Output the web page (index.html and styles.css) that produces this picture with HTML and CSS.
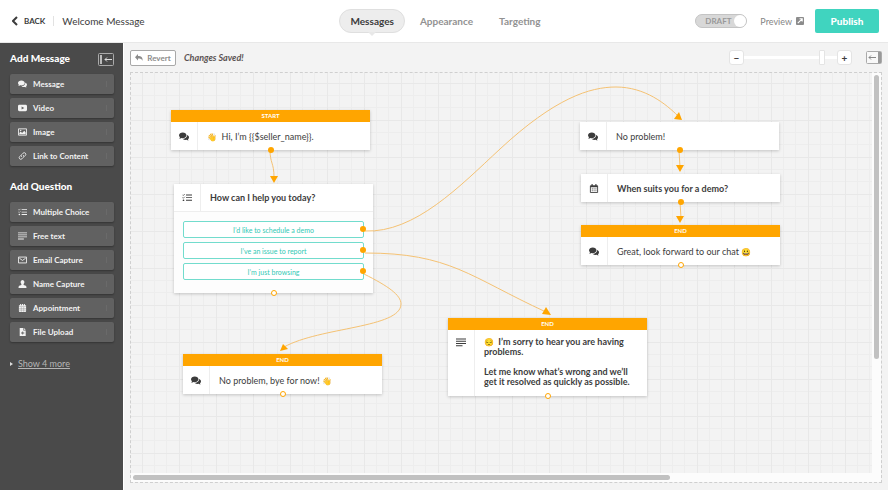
FILE: index.html
```html
<!DOCTYPE html>
<html lang="en">
<head>
  <meta charset="UTF-8" />
  <meta name="viewport" content="width=device-width, initial-scale=1.0"/>
  <title>Welcome Message</title>
  <link rel="stylesheet" href="styles.css">
</head>
<body>
  <!-- shared icons -->
  <svg class="sprite" aria-hidden="true">
    <symbol id="i-chat" viewBox="0 0 20 16">
      <path d="M7.5 0C3.4 0 0 2.5 0 5.7c0 1.5.7 2.8 1.9 3.8C1.7 10.7 1 11.8.6 12.3c1.7 0 3.3-.7 4.3-1.3.8.2 1.7.4 2.6.4C11.6 11.4 15 8.9 15 5.7S11.6 0 7.5 0z"/>
      <path d="M16.3 5.2c.1 4.3-3.6 7.500-8.500 7.600 1.200 1.300 3.100 2.100 5.200 2.100.8 0 1.500-.1 2.200-.3.9.6 2.300 1.200 4 1.200-.5-.6-1-1.500-1.200-2.500 1.200-.9 2-2.100 2-3.500 0-2-1.500-3.800-3.700-4.600z"/>
    </symbol>
    <symbol id="i-list" viewBox="0 0 20 16">
      <path d="M1 2.500l1.500 1.500L5.500 1M1 8l1.500 1.500L5.500 6.500" fill="none" stroke="currentColor" stroke-width="1.500"/>
      <circle cx="3" cy="13.500" r="1.700"/>
      <path d="M8 2h12v1.800H8zM8 7.300h12v1.800H8zM8 12.600h12v1.800H8z"/>
    </symbol>
    <symbol id="i-lines" viewBox="0 0 20 16">
      <path d="M0 0h20v2H0zM0 4.500h20v2H0zM0 9h20v2H0zM0 13.500h13v2H0z"/>
    </symbol>
    <symbol id="i-calendar" viewBox="0 0 20 20">
      <path d="M2 4h16v15H2z" fill="none" stroke="currentColor" stroke-width="2"/>
      <path d="M4.500 0H7v4H4.500zM13 0h2.500v4H13zM2 4h16v3H2z"/>
      <path d="M5 9.500h2.500v2.500H5zM9 9.500h2.500v2.500H9zM13 9.500h2.500v2.500H13zM5 14h2.500v2H5zM9 14h2.500v2H9zM13 14h2.500v2H13z" opacity=".7"/>
    </symbol>
  </svg>

  <header class="topbar">
    <div class="topbar-left">
      <a class="back" href="#">
        <svg width="6" height="10" viewBox="0 0 6 10"><path d="M5 1L1 5l4 4" fill="none" stroke="currentColor" stroke-width="2"/></svg>
        BACK
      </a>
      <h1>Welcome Message</h1>
    </div>

    <nav class="tabs">
      <a class="tab active" href="#">Messages</a>
      <a class="tab" href="#">Appearance</a>
      <a class="tab" href="#">Targeting</a>
    </nav>

    <div class="topbar-right">
      <button class="draft-toggle" type="button" role="switch" aria-checked="false"><span>DRAFT</span><i></i></button>
      <a class="preview" href="#">Preview
        <svg width="8" height="8" viewBox="0 0 18 18"><rect width="18" height="18" rx="2" fill="#8c8c8c"/><path d="M8 4h6v6M14 4L4 14" fill="none" stroke="#fff" stroke-width="2.500"/></svg>
      </a>
      <button class="publish" type="button">Publish</button>
    </div>
  </header>

  <div class="layout">
    <aside class="sidebar">
      <div class="sidebar-head">
        <h2>Add Message</h2>
        <button class="collapse" type="button" aria-label="Collapse sidebar">
          <svg width="16" height="13" viewBox="0 0 16 13"><rect x=".5" y=".5" width="15" height="12" rx="1" fill="none" stroke="#aaa"/><path d="M2 2h2v9H2z" fill="#bbb"/><path d="M14 6.500H7M9 4.500l-2 2 2 2" fill="none" stroke="#ddd"/></svg>
        </button>
      </div>
      <div class="block-list">
        <button class="block" type="button"><svg><use href="#i-chat"/></svg>Message</button>
        <button class="block" type="button">
          <svg viewBox="0 0 20 16"><path fill-rule="evenodd" d="M3 1h14q3 0 3 3v8q0 3-3 3H3q-3 0-3-3V4q0-3 3-3zM8 4.500v7l6-3.500z"/></svg>Video
        </button>
        <button class="block" type="button">
          <svg viewBox="0 0 20 16"><path d="M1 1h18v14H1z" fill="none" stroke="currentColor" stroke-width="2"/><path d="M3 13v-3l3-3 3 3 5-5 3 4v4z"/><circle cx="6" cy="4.500" r="1.500"/></svg>Image
        </button>
        <button class="block" type="button">
          <svg viewBox="0 0 20 20"><g transform="rotate(-45 10 10)" fill="none" stroke="currentColor" stroke-width="2"><path d="M8 6H4a4 4 0 0 0 0 8h5a4 4 0 0 0 4-4"/><path d="M12 14h4a4 4 0 0 0 0-8h-5a4 4 0 0 0-4 4"/></g></svg>Link to Content
        </button>
      </div>

      <h2>Add Question</h2>
      <div class="block-list">
        <button class="block" type="button"><svg><use href="#i-list"/></svg>Multiple Choice</button>
        <button class="block" type="button"><svg><use href="#i-lines"/></svg>Free text</button>
        <button class="block" type="button">
          <svg viewBox="0 0 20 16"><path d="M1 1.500h18v13H1zM3 4l7 5 7-5" fill="none" stroke="currentColor" stroke-width="2"/></svg>Email Capture
        </button>
        <button class="block" type="button">
          <svg viewBox="0 0 20 18"><path d="M10 0a4.500 5 0 0 1 2.500 9v2l5 2q1.500 1 1.500 5H1q0-4 1.500-5l5-2V9A4.500 5 0 0 1 10 0z"/></svg>Name Capture
        </button>
        <button class="block" type="button">
          <svg viewBox="0 0 20 20"><path d="M4 0h2.500v3h2V0H11.500v3h2V0H16v3h3v3H1V3h3zM1 7h18v11q0 2-2 2H3q-2 0-2-2z"/><path d="M1 11.500h18M1 15.500h18M7 7v13M13 7v13" stroke="#777" stroke-width=".8"/></svg>Appointment
        </button>
        <button class="block" type="button">
          <svg viewBox="0 0 20 20"><path fill-rule="evenodd" d="M3 0h9v6h6v14H3zM13.500 0L18 4.500h-4.500zM9.500 8.500v3h-3v2h3v3h2v-3h3v-2h-3v-3z"/></svg>File Upload
        </button>
      </div>
      <a class="show-more" href="#">Show 4 more</a>
    </aside>

    <main class="editor">
      <div class="toolbar">
        <button class="revert" type="button">
          <svg width="8" height="7" viewBox="0 0 16 14"><path d="M6 0v4c6 0 10 2 9 10-1-4-4-5-9-5v4L0 6.500z"/></svg>
          Revert
        </button>
        <em class="status">Changes Saved!</em>
        <div class="zoom">
          <button type="button" aria-label="Zoom out">−</button>
          <input type="range" min="0" max="100" value="86" aria-label="Zoom">
          <button type="button" aria-label="Zoom in">+</button>
        </div>
        <button class="collapse" type="button" aria-label="Expand panel">
          <svg width="16" height="13" viewBox="0 0 16 13"><rect x=".5" y=".5" width="15" height="12" rx="1" fill="#f8f8f8" stroke="#aaa"/><path d="M12 1h3v11h-3z" fill="#999"/><path d="M10 6.500H3M5 4.500l-2 2 2 2" fill="none" stroke="#888"/></svg>
        </button>
      </div>

      <div class="canvas">
        <svg class="links" aria-hidden="true">
          <g class="lines">
            <path d="M139 77C139 90 143 90 143 104"/>
            <path d="M234 158C284 160 329 113 369 76C424 25 459 14 485 14C514 14 535 31 547 43"/>
            <path d="M234 180C319 180 339 204 415 239"/>
            <path d="M233 201C257 213 270 222 270 231C270 255 189 254 153 274"/>
            <path d="M548 78L549 94M549 129L550 145"/>
          </g>
          <g class="arrows">
            <path d="M139 103h8l-4 7z"/>
            <path d="M548 39l3 8-8-1z"/>
            <path d="M415 234l5 8-9-1z"/>
            <path d="M152 271l5 5-8 2z"/>
            <path d="M545 92h8l-4 7z"/>
            <path d="M545 143h8l-4 7z"/>
          </g>
        </svg>

        <section class="node node-start">
          <div class="label">START</div>
          <div class="body"><div class="kind"><svg><use href="#i-chat"/></svg></div><p><span class="emoji">👋</span>&nbsp; Hi, I’m {{$seller_name}}.</p></div>
          <span class="port"></span>
        </section>

        <section class="node node-help">
          <div class="body question"><div class="kind"><svg><use href="#i-list"/></svg></div><p>How can I help you today?</p></div>
          <div class="options">
            <button type="button">I’d like to schedule a demo<span class="port side"></span></button>
            <button type="button">I’ve an issue to report<span class="port side"></span></button>
            <button type="button">I’m just browsing<span class="port side"></span></button>
          </div>
          <span class="port open"></span>
        </section>

        <section class="node node-ok">
          <div class="body"><div class="kind"><svg><use href="#i-chat"/></svg></div><p>No problem!</p></div>
          <span class="port"></span>
        </section>

        <section class="node node-demo">
          <div class="body question"><div class="kind"><svg><use href="#i-calendar"/></svg></div><p>When suits you for a demo?</p></div>
          <span class="port"></span>
        </section>

        <section class="node node-great">
          <div class="label">END</div>
          <div class="body"><div class="kind"><svg><use href="#i-chat"/></svg></div><p>Great, look forward to our chat <span class="emoji">😀</span></p></div>
          <span class="port open"></span>
        </section>

        <section class="node node-bye">
          <div class="label">END</div>
          <div class="body"><div class="kind"><svg><use href="#i-chat"/></svg></div><p>No problem, bye for now! <span class="emoji">👋</span></p></div>
          <span class="port open"></span>
        </section>

        <section class="node node-sorry">
          <div class="label">END</div>
          <div class="body question long">
            <div class="kind"><svg><use href="#i-lines"/></svg></div>
            <div class="text">
              <p><span class="emoji">😔</span>&nbsp; I’m sorry to hear you are having problems.</p>
              <p>Let me know what’s wrong and we’ll get it resolved as quickly as possible.</p>
            </div>
          </div>
          <span class="port open"></span>
        </section>

        <div class="scroll-y"><i></i></div>
        <div class="scroll-x"><i></i></div>
      </div>
    </main>
  </div>
</body>
</html>
```
FILE: styles.css
```css
* {
  box-sizing: border-box;
}

body {
  margin: 0;
  height: 100vh;
  display: flex;
  flex-direction: column;
  font-family: Lato, "Liberation Sans", sans-serif;
  font-size: 9px;
  color: #3c3c3c;
  background: #f3f3f3;
}

h1, h2, p {
  margin: 0;
}

a {
  color: inherit;
  text-decoration: none;
}

button {
  font: inherit;
  color: inherit;
  padding: 0;
  border: none;
  background: none;
  cursor: pointer;
}

svg {
  display: block;
  fill: currentColor;
}

.sprite {
  position: absolute;
  width: 0;
  height: 0;
}

/* Top bar */

.topbar {
  display: grid;
  grid-template-columns: 1fr auto 1fr;
  align-items: center;
  height: 43px;
  padding: 0 9px 0 12px;
  background: #fff;
  border-bottom: 1px solid #e8e8e8;
}

.topbar-left {
  display: flex;
  align-items: center;
}

.back {
  display: flex;
  align-items: center;
  gap: 6px;
  padding-right: 8px;
  border-right: 1px solid #e2e2e2;
  font-size: 8px;
  font-weight: bold;
}

h1 {
  margin-left: 8px;
  font-size: 10px;
  font-weight: normal;
}

.tabs {
  display: flex;
  gap: 4px;
}

.tab {
  position: relative;
  padding: 0 10px;
  border: 1px solid transparent;
  border-radius: 12px;
  font-size: 10px;
  line-height: 22px;
  font-weight: bold;
  color: #929292;
}

.tab.active {
  color: #3c3c3c;
  background: #ededed;
  border-color: #dfdfdf;
}

.tab.active::after {
  content: "";
  position: absolute;
  left: 50%;
  top: 100%;
  margin-left: -4px;
  border: 4px solid transparent;
  border-top-color: #e8e8e8;
  border-bottom: none;
}

.topbar-right {
  display: flex;
  align-items: center;
  justify-content: flex-end;
}

.draft-toggle {
  display: flex;
  align-items: center;
  justify-content: space-between;
  width: 52px;
  height: 14px;
  padding-left: 9px;
  border: 1px solid #c4c4c4;
  border-radius: 7px;
  background: #d8d8d8;
  color: #999;
  font-size: 8px;
  font-weight: bold;
}

.draft-toggle i {
  width: 12px;
  height: 12px;
  border-radius: 50%;
  background: #fff;
}

.preview {
  display: flex;
  align-items: center;
  gap: 4px;
  margin: 0 11px 0 13px;
  color: #858585;
}

.publish {
  width: 64px;
  height: 24px;
  border-radius: 2px;
  background: #40d4bf;
  color: #fff;
  font-size: 10px;
  font-weight: 900;
}

/* Sidebar */

.layout {
  flex: 1;
  display: flex;
  min-height: 0;
}

.sidebar {
  flex: none;
  width: 124px;
  padding: 6px 9px 0 10px;
  background: #4a4a4a;
  border-right: 1px solid #fff;
  color: #f2f2f2;
}

.sidebar-head {
  display: flex;
  align-items: flex-end;
  justify-content: space-between;
}

.sidebar-head .collapse {
  margin-top: 4px;
}

h2 {
  font-size: 10px;
  line-height: 16px;
  font-weight: 900;
  color: #fff;
}

.block-list {
  display: flex;
  flex-direction: column;
  gap: 4px;
  margin: 8px 0 12px;
}

.block {
  display: flex;
  align-items: center;
  gap: 6px;
  height: 20px;
  padding-left: 8px;
  border-radius: 2px;
  background: #616161;
  box-shadow: 0 1px 2px rgba(0, 0, 0, 0.3);
  font-size: 8px;
  font-weight: bold;
}

.block::after {
  content: "";
  width: 1px;
  height: 6px;
  margin: 0 7px 0 auto;
  background: #6a6a6a;
}

.block svg {
  width: 9px;
  height: 8px;
}

.show-more {
  display: flex;
  align-items: center;
  gap: 5px;
  margin-top: 16px;
  color: #b5b5b5;
  text-decoration: underline;
}

.show-more::before {
  content: "";
  border: 2px solid transparent;
  border-left: 3px solid #ddd;
  border-right: none;
}

/* Editor */

.editor {
  flex: 1;
  min-width: 0;
  display: flex;
  flex-direction: column;
  padding: 0 6px 7px;
}

.toolbar {
  display: flex;
  align-items: center;
  height: 29px;
}

.revert {
  display: flex;
  align-items: center;
  justify-content: center;
  gap: 4px;
  width: 46px;
  height: 16px;
  border: 1px solid #a8a8a8;
  border-radius: 2px;
  background: #fff;
  color: #8c8c8c;
  font-size: 8px;
  font-weight: bold;
}

.status {
  margin-left: 8px;
  font-weight: bold;
  color: #5a5252;
}

.zoom {
  display: flex;
  align-items: center;
  margin: 0 14px 0 auto;
}

.zoom button {
  width: 15px;
  height: 15px;
  border: 1px solid #e4e4e4;
  border-radius: 3px;
  background: #fff;
  font-size: 10px;
  line-height: 12px;
  font-weight: bold;
}

.zoom input {
  appearance: none;
  width: 93px;
  height: 15px;
  margin: 0;
  background: linear-gradient(#fff, #fff) center / 100% 3px no-repeat;
}

.zoom input::-webkit-slider-thumb {
  appearance: none;
  width: 6px;
  height: 15px;
  border: 1px solid #e4e4e4;
  border-radius: 1px;
  background: #fff;
}

/* every third grid line is a little darker */
.canvas {
  --minor: transparent 12px, #ededed 12px 13px, transparent 13px 24px, #ededed 24px 25px, transparent 25px;
  flex: 1;
  position: relative;
  border: 1px dashed #cfcfcf;
  overflow: hidden;
  background-color: #f3f3f3;
  background-image:
    linear-gradient(#e8e8e8 1px, transparent 1px),
    linear-gradient(90deg, #e8e8e8 1px, transparent 1px),
    linear-gradient(var(--minor)),
    linear-gradient(90deg, var(--minor));
  background-size: 37px 37px;
  background-position: 11px 10px;
}

.links {
  position: absolute;
  left: 0;
  top: 0;
  width: 100%;
  height: 100%;
  z-index: 1;
  pointer-events: none;
}

.lines {
  fill: none;
  stroke: #f5c273;
}

.arrows {
  fill: #ffa500;
}

.node {
  position: absolute;
  width: 199px;
  background: #fff;
  box-shadow: 0 1px 3px rgba(0, 0, 0, 0.2);
}

.node-start { left: 40px; top: 37px; }
.node-help { left: 43px; top: 111px; }
.node-ok { left: 449px; top: 49px; }
.node-demo { left: 450px; top: 101px; }
.node-great { left: 450px; top: 152px; }
.node-bye { left: 52px; top: 281px; }
.node-sorry { left: 317px; top: 245px; }

.label {
  background: #ffa500;
  color: #fff;
  font-size: 6px;
  line-height: 12px;
  font-weight: bold;
  text-align: center;
}

.body {
  display: flex;
  align-items: center;
  min-height: 28px;
}

.node-help .body {
  border-bottom: 1px solid #eee;
}

.question {
  font-weight: bold;
}

.kind {
  align-self: stretch;
  display: flex;
  align-items: center;
  justify-content: center;
  width: 27px;
  margin-right: 9px;
  border-right: 1px solid #eee;
}

.kind svg {
  width: 10px;
  height: 9px;
}

.long .kind {
  flex: none;
  align-items: flex-start;
  padding-top: 8px;
}

.text {
  display: flex;
  flex-direction: column;
  gap: 10px;
  padding: 7px 14px 9px 0;
  line-height: 10px;
}

.emoji {
  font-family: "Noto Color Emoji", sans-serif;
  font-size: 8px;
  line-height: 1;
}

.options {
  display: flex;
  flex-direction: column;
  gap: 4px;
  padding: 9px 9px 13px;
  background: #fdfdfd;
}

.options button {
  position: relative;
  height: 17px;
  border: 1px solid #72dccd;
  border-radius: 2px;
  background: #fff;
  color: #33c9b4;
  font-size: 7px;
}

.port {
  position: absolute;
  z-index: 2;
  left: 50%;
  bottom: -3px;
  width: 6px;
  height: 6px;
  margin-left: -3px;
  border-radius: 50%;
  background: #ffa500;
}

.port.open {
  border: 1px solid #ffa500;
  background: #fff;
}

.port.side {
  left: auto;
  right: -3px;
  bottom: 5px;
}

.scroll-y,
.scroll-x {
  position: absolute;
  background: #fcfcfc;
}

.scroll-y {
  top: 0;
  bottom: 0;
  right: 0;
  width: 9px;
  padding: 2px;
}

.scroll-x {
  left: 0;
  right: 0;
  bottom: 0;
  height: 9px;
  padding: 2px;
}

.scroll-y i,
.scroll-x i {
  display: block;
  border-radius: 3px;
  background: #c1c1c1;
}

.scroll-y i {
  height: 70%;
}

.scroll-x i {
  width: 72%;
  height: 5px;
}
```
